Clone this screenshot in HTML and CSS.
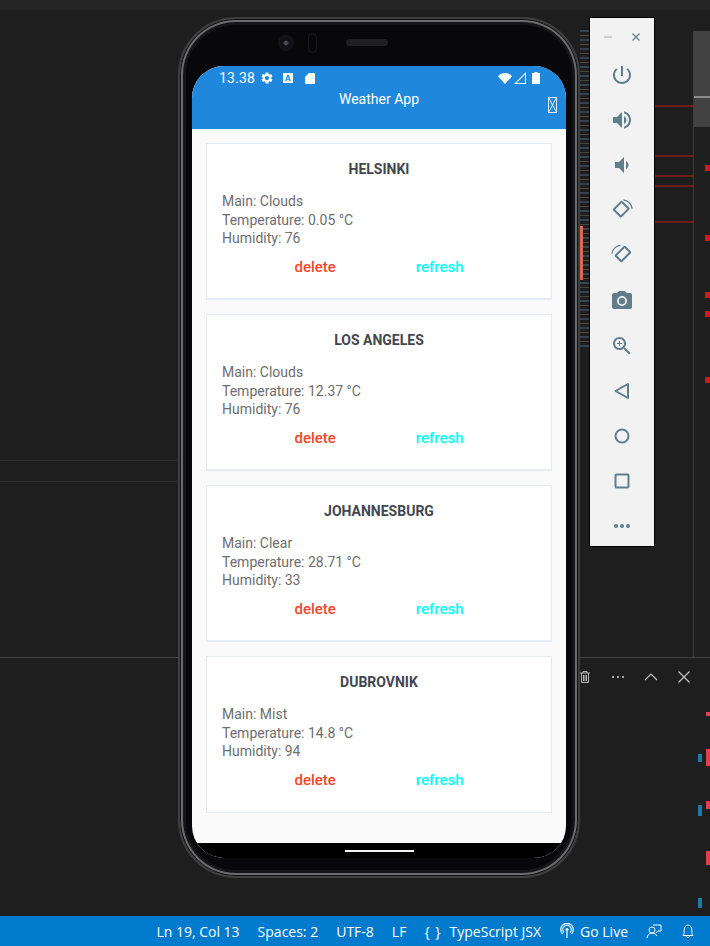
FILE: index.html
```html
<!DOCTYPE html>
<html lang="en">
<head>
    <meta charset="utf-8">
    <meta name="viewport" content="width=device-width, initial-scale=1.0">
    <title>Weather App</title>
    <link rel="stylesheet" href="styles.css">
</head>
<body>
    <div class="desktop">
        <!-- editor behind the emulator -->
        <div class="editor">
            <div class="titlestrip"></div>
            <div class="scroll-rule"></div>
            <div class="scroll-thumb"></div>
            <div class="scroll-thumb-line"></div>
            <div class="tab-line tab-line-a"></div>
            <div class="tab-line tab-line-b"></div>
            <div class="panel-line"></div>

            <div class="minimap"></div>
            <div class="minimap-accent"></div>

            <div class="err-line err-a"></div>
            <div class="err-line err-b"></div>
            <div class="err-line err-c"></div>
            <div class="err-line err-d"></div>
            <div class="err-line err-e"></div>

            <div class="mark mark-red m1"></div>
            <div class="mark mark-red m2"></div>
            <div class="mark mark-red m3"></div>
            <div class="mark mark-red m4"></div>
            <div class="mark mark-red m5"></div>
            <div class="mark mark-red m6"></div>
            <div class="mark mark-pink m7"></div>
            <div class="mark mark-pink m8"></div>
            <div class="mark mark-pink m9"></div>
            <div class="mark mark-pink m10"></div>
            <div class="mark mark-blue b1"></div>
            <div class="mark mark-blue b2"></div>
            <div class="mark mark-blue b3"></div>

            <div class="panel-actions">
                <svg class="panel-icon" viewBox="0 0 16 16"><path d="M3 4h10M6 4V2.5h4V4M4.5 4v9.5h7V4M6.5 6v6M8 6v6M9.5 6v6" fill="none" stroke="#b5b5b5" stroke-width="1"/></svg>
                <svg class="panel-icon" viewBox="0 0 16 16"><circle cx="3" cy="8" r="1.1" fill="#c5c5c5"/><circle cx="8" cy="8" r="1.1" fill="#c5c5c5"/><circle cx="13" cy="8" r="1.1" fill="#c5c5c5"/></svg>
                <svg class="panel-icon" viewBox="0 0 16 16"><path d="M2 11l6-6 6 6" fill="none" stroke="#c5c5c5" stroke-width="1.2"/></svg>
                <svg class="panel-icon" viewBox="0 0 16 16"><path d="M2.5 2.5l11 11M13.5 2.5l-11 11" fill="none" stroke="#c5c5c5" stroke-width="1.2"/></svg>
            </div>
        </div>

        <!-- phone -->
        <div class="phone">
            <div class="bezel-top">
                <span class="camera"></span>
                <span class="sensor"></span>
                <span class="speaker"></span>
            </div>
            <div class="screen">
                <header class="appbar">
                    <div class="statusbar">
                        <span class="clock">13.38</span>
                        <svg class="st-icon st-gear" viewBox="0 0 24 24"><path d="M19.14 12.94c.04-.3.06-.61.06-.94 0-.32-.02-.64-.07-.94l2.03-1.58c.18-.14.23-.41.12-.61l-1.92-3.32c-.12-.22-.37-.29-.59-.22l-2.39.96c-.5-.38-1.03-.7-1.62-.94l-.36-2.54c-.04-.24-.24-.41-.48-.41h-3.84c-.24 0-.43.17-.47.41l-.36 2.54c-.59.24-1.13.57-1.62.94l-2.39-.96c-.22-.08-.47 0-.59.22L2.74 8.87c-.12.21-.08.47.12.61l2.03 1.58c-.05.3-.09.63-.09.94s.02.64.07.94l-2.03 1.58c-.18.14-.23.41-.12.61l1.92 3.32c.12.22.37.29.59.22l2.39-.96c.5.38 1.03.7 1.62.94l.36 2.54c.05.24.24.41.48.41h3.84c.24 0 .44-.17.47-.41l.36-2.54c.59-.24 1.13-.56 1.62-.94l2.39.96c.22.08.47 0 .59-.22l1.92-3.32c.12-.22.07-.47-.12-.61l-2.01-1.58zM12 15.6c-1.98 0-3.6-1.62-3.6-3.6s1.62-3.6 3.6-3.6 3.6 1.62 3.6 3.6-1.62 3.6-3.6 3.6z" fill="#fff"/></svg>
                        <svg class="st-icon st-a" viewBox="0 0 10 10"><path fill-rule="evenodd" d="M0 0h10v10H0zM4.2 2L2.2 8h1.3l.4-1.3h2.2L6.5 8h1.3L5.8 2zM4.2 5.7L5 3.4l.7 2.3z" fill="#fff"/></svg>
                        <svg class="st-icon st-sd" viewBox="0 0 10 11"><path d="M4 0h5a1 1 0 0 1 1 1v9a1 1 0 0 1-1 1H1a1 1 0 0 1-1-1V4z" fill="#fff"/></svg>
                        <span class="st-spacer"></span>
                        <svg class="st-icon st-wifi" viewBox="0 0 14 11"><path d="M7 11L0 3.2C1.8 1.2 4.2 0 7 0s5.2 1.2 7 3.2z" fill="#fff"/></svg>
                        <svg class="st-icon st-signal" viewBox="0 0 12 12"><path fill-rule="evenodd" d="M12 0v12H0zM11 2.6L2.6 11H11z" fill="#fff"/></svg>
                        <svg class="st-icon st-batt" viewBox="0 0 8 12"><path d="M2.5 0h3v1H8v11H0V1h2.5z" fill="#fff"/></svg>
                    </div>
                    <div class="titlebar">
                        <h1 class="apptitle">Weather App</h1>
                        <svg class="tofu" viewBox="0 0 9 16"><path d="M.5.5h8v15h-8zM.5.5l8 15M8.5.5l-8 15" fill="none" stroke="#fff" stroke-width="1" opacity=".85"/></svg>
                    </div>
                </header>

                <main class="content">
                    <section class="card">
                        <h2 class="city">HELSINKI</h2>
                        <p class="info">Main: Clouds</p>
                        <p class="info">Temperature: 0.05 °C</p>
                        <p class="info">Humidity: 76</p>
                        <div class="actions"><button class="btn btn-delete">delete</button><button class="btn btn-refresh">refresh</button></div>
                    </section>
                    <section class="card">
                        <h2 class="city">LOS ANGELES</h2>
                        <p class="info">Main: Clouds</p>
                        <p class="info">Temperature: 12.37 °C</p>
                        <p class="info">Humidity: 76</p>
                        <div class="actions"><button class="btn btn-delete">delete</button><button class="btn btn-refresh">refresh</button></div>
                    </section>
                    <section class="card">
                        <h2 class="city">JOHANNESBURG</h2>
                        <p class="info">Main: Clear</p>
                        <p class="info">Temperature: 28.71 °C</p>
                        <p class="info">Humidity: 33</p>
                        <div class="actions"><button class="btn btn-delete">delete</button><button class="btn btn-refresh">refresh</button></div>
                    </section>
                    <section class="card card-last">
                        <h2 class="city">DUBROVNIK</h2>
                        <p class="info">Main: Mist</p>
                        <p class="info">Temperature: 14.8 °C</p>
                        <p class="info">Humidity: 94</p>
                        <div class="actions"><button class="btn btn-delete">delete</button><button class="btn btn-refresh">refresh</button></div>
                    </section>
                </main>

                <div class="navbar"><span class="home-pill"></span></div>
            </div>
        </div>

        <!-- emulator side toolbar -->
        <aside class="toolbar">
            <div class="win-controls">
                <svg class="win-icon" viewBox="0 0 8 8"><path d="M0 4h8" stroke="#a9b7be" stroke-width="1.2"/></svg>
                <svg class="win-icon" viewBox="0 0 8 8"><path d="M.5.5l7 7M7.5.5l-7 7" stroke="#607d8b" stroke-width="1.2"/></svg>
            </div>
            <svg class="tool" viewBox="0 0 24 24"><path d="M13 3h-2v10h2V3zm4.83 2.17l-1.42 1.42C17.99 7.86 19 9.81 19 12c0 3.87-3.13 7-7 7s-7-3.13-7-7c0-2.19 1.01-4.14 2.58-5.42L6.17 5.17C4.23 6.82 3 9.26 3 12c0 4.97 4.03 9 9 9s9-4.03 9-9c0-2.74-1.23-5.18-3.17-6.83z"/></svg>
            <svg class="tool" viewBox="0 0 24 24"><path d="M3 9v6h4l5 5V4L7 9H3zm13.5 3c0-1.77-1.02-3.29-2.5-4.03v8.05c1.48-.73 2.5-2.25 2.5-4.02zM14 3.23v2.06c2.89.86 5 3.54 5 6.71s-2.11 5.85-5 6.71v2.06c4.01-.91 7-4.49 7-8.77s-2.99-7.86-7-8.77z"/></svg>
            <svg class="tool" viewBox="0 0 24 24"><path d="M18.5 12c0-1.77-1.02-3.29-2.5-4.03v8.05c1.48-.73 2.5-2.25 2.5-4.02zM5 9v6h4l5 5V4L9 9H5z"/></svg>
            <svg class="tool" viewBox="0 0 24 24"><path fill-rule="evenodd" d="M10.5 3.2a1.6 1.6 0 0 1 2.2 0l6.4 6.4a1.6 1.6 0 0 1 0 2.2l-7.2 7.2a1.6 1.6 0 0 1-2.2 0L3.3 12.600a1.600 1.600 0 0 1 0-2.200zM11.600 5L5.100 11.500l5.700 5.700 6.500-6.500z"/><path d="M13.500 1.300a11 11 0 0 1 9.300 9.200l-1.300.2a9.700 9.700 0 0 0-8.200-8.100z"/></svg>
            <svg class="tool" viewBox="0 0 24 24"><path fill-rule="evenodd" d="M13.500 3.200a1.600 1.600 0 0 1 2.200 0l5 5a1.600 1.600 0 0 1 0 2.200l-8.300 8.300a1.600 1.600 0 0 1-2.200 0l-5-5a1.600 1.600 0 0 1 0-2.200zM14.600 5L7 12.600l4.300 4.300L18.900 9.300z"/><path d="M10.500 1.400a11 11 0 0 0-9.300 9.200l1.300.2a9.700 9.700 0 0 1 8.200-8.100z"/></svg>
            <svg class="tool" viewBox="0 0 24 24"><path fill-rule="evenodd" d="M9 2L7.170 4H4c-1.100 0-2 .9-2 2v12c0 1.100.9 2 2 2h16c1.100 0 2-.9 2-2V6c0-1.100-.9-2-2-2h-3.170L15 2H9zm3 15a5 5 0 1 1 0-10 5 5 0 0 1 0 10z"/><circle cx="12" cy="12" r="3.200"/></svg>
            <svg class="tool" viewBox="0 0 24 24"><path d="M15.500 14h-.79l-.28-.27C15.410 12.590 16 11.110 16 9.500 16 5.910 13.090 3 9.500 3S3 5.910 3 9.500 5.910 16 9.500 16c1.610 0 3.090-.59 4.230-1.570l.27.28v.79l5 4.990L20.490 19l-4.990-5zm-6 0C7.010 14 5 11.990 5 9.500S7.010 5 9.500 5 14 7.010 14 9.500 11.990 14 9.500 14z"/><path d="M12 10h-2v2H9v-2H7V9h2V7h1v2h2v1z"/></svg>
            <svg class="tool" viewBox="0 0 24 24"><path d="M18 5v14L5.500 12z" fill="none" stroke="#607d8b" stroke-width="2" stroke-linejoin="round"/></svg>
            <svg class="tool" viewBox="0 0 24 24"><circle cx="12" cy="12" r="6.500" fill="none" stroke="#607d8b" stroke-width="2"/></svg>
            <svg class="tool" viewBox="0 0 24 24"><rect x="5.500" y="5.500" width="13" height="13" rx="1" fill="none" stroke="#607d8b" stroke-width="2"/></svg>
            <svg class="tool" viewBox="0 0 24 24"><circle cx="6" cy="12" r="2"/><circle cx="12" cy="12" r="2"/><circle cx="18" cy="12" r="2"/></svg>
        </aside>

        <!-- vs code status bar -->
        <footer class="vs-status">
            <span>Ln 19, Col 13</span>
            <span>Spaces: 2</span>
            <span>UTF-8</span>
            <span>LF</span>
            <span class="vs-lang"><span class="braces">{ }</span>TypeScript JSX</span>
            <span class="vs-live">
                <svg class="vs-icon" viewBox="0 0 16 16"><circle cx="8" cy="6.500" r="1.500" fill="#fff"/><path d="M5 9.500a4.200 4.200 0 1 1 6 0M3.500 11a6.300 6.300 0 1 1 9 0M8 8v7" fill="none" stroke="#fff" stroke-width="1.200"/></svg>
                Go Live
            </span>
            <svg class="vs-icon vs-feedback" viewBox="0 0 16 16"><circle cx="6" cy="7" r="3" fill="none" stroke="#fff"/><path d="M1 15c.4-3 2.400-5 5-5s4.200 1.500 4.800 3M7 2h8v6h-3l-2 2" fill="none" stroke="#fff"/></svg>
            <svg class="vs-icon vs-bell" viewBox="0 0 16 16"><path d="M3 12.500c1-1 1.200-2.500 1.200-5C4.200 4 5.800 2 8 2s3.800 2 3.800 5.500c0 2.500.2 4 1.200 5zM6.500 13c0 1 .7 1.500 1.500 1.500s1.500-.5 1.500-1.500" fill="none" stroke="#fff"/></svg>
        </footer>
    </div>
</body>
</html>
```

FILE: styles.css
```css
* {
    box-sizing: border-box;
}

body {
    margin: 0;
    background-color: #1e1e1e;
    font-family: "Roboto", sans-serif;
}

.desktop {
    position: relative;
    width: 710px;
    height: 946px;
    overflow: hidden;
    display: flex;
    flex-direction: column;
    justify-content: flex-end;
}

/* Editor backdrop */
.editor {
    position: absolute;
    inset: 0 0 30px 0;
    background-color: #1e1e1e;
}

.titlestrip {
    height: 10px;
    background-color: #252526;
}

.scroll-rule {
    position: absolute;
    left: 693px;
    top: 31px;
    width: 1px;
    height: 626px;
    background-color: #3c3c3c;
}

.scroll-thumb {
    position: absolute;
    left: 694px;
    top: 31px;
    width: 16px;
    height: 96px;
    background-color: #424242;
}

.scroll-thumb-line {
    position: absolute;
    left: 694px;
    top: 96px;
    width: 16px;
    height: 2px;
    background-color: #8a8a8a;
}

.tab-line {
    position: absolute;
    left: 0;
    width: 177px;
    height: 1px;
    background-color: #2f2f2f;
}

.tab-line-a {
    top: 460px;
}

.tab-line-b {
    top: 481px;
}

.panel-line {
    position: absolute;
    left: 0;
    top: 657px;
    width: 710px;
    height: 1px;
    background-color: #444;
}

.minimap {
    position: absolute;
    left: 580px;
    top: 30px;
    width: 9px;
    height: 320px;
    background: repeating-linear-gradient(180deg, #3d5366 0 2px, #1e1e1e 2px 5px, #5c5a44 5px 6px, #1e1e1e 6px 9px);
    opacity: .7;
}

.minimap-accent {
    position: absolute;
    left: 580px;
    top: 226px;
    width: 3px;
    height: 54px;
    background-color: #d9694f;
}

.err-line {
    position: absolute;
    left: 655px;
    width: 38px;
    height: 2px;
    background-color: #6f1c1c;
}

.err-a { top: 105px; }
.err-b { top: 155px; }
.err-c { top: 175px; }
.err-d { top: 185px; }
.err-e { top: 221px; }

.mark {
    position: absolute;
}

.mark-red {
    left: 705px;
    width: 5px;
    height: 6px;
    background-color: #c51f1f;
}

.m1 { top: 165px; }
.m2 { top: 235px; }
.m3 { top: 292px; }
.m4 { top: 311px; }
.m5 { top: 377px; }
.m6 { top: 0; display: none; }

.mark-pink {
    left: 706px;
    width: 4px;
    background-color: #e2404a;
}

.m7 { top: 712px; height: 4px; }
.m8 { top: 749px; height: 17px; }
.m9 { top: 801px; height: 8px; }
.m10 { top: 851px; height: 14px; }

.mark-blue {
    left: 698px;
    width: 4px;
    background-color: #1b7aa8;
}

.b1 { top: 754px; height: 8px; }
.b2 { top: 805px; height: 11px; }
.b3 { top: 898px; height: 10px; }

.panel-actions {
    position: absolute;
    left: 577px;
    top: 669px;
    display: flex;
    gap: 17px;
}

.panel-icon {
    width: 16px;
    height: 16px;
}

/* Phone */
.phone {
    position: absolute;
    left: 178px;
    top: 17px;
    width: 402px;
    height: 861px;
    padding: 0 12px 0 12px;
    border: 2px solid #3f3f3f;
    border-radius: 58px;
    background-color: #08080a;
    box-shadow: inset 0 0 0 1px #101010, inset 0 0 0 3px #6c6c6f, inset 0 0 0 6px #151517;
}

.bezel-top {
    height: 47px;
    display: flex;
    align-items: center;
    padding-left: 86px;
}

.camera {
    width: 16px;
    height: 16px;
    border-radius: 50%;
    background: radial-gradient(circle, #4a4a50 0 1.500px, #101014 3px, #16161a 100%);
}

.sensor {
    width: 9px;
    height: 20px;
    margin-left: 14px;
    border-radius: 5px;
    border: 1px solid #18181b;
}

.speaker {
    width: 42px;
    height: 7px;
    margin-left: 29px;
    border-radius: 4px;
    background-color: #1f1f22;
}

.screen {
    height: 792px;
    border-radius: 32px;
    overflow: hidden;
    display: flex;
    flex-direction: column;
    background-color: #fafafa;
}

.appbar {
    height: 63px;
    background-color: #2088dc;
    color: #fff;
}

.statusbar {
    height: 24px;
    display: flex;
    align-items: center;
    padding: 0 26px 0 27px;
}

.clock {
    font-size: 14px;
    width: 41px;
    letter-spacing: .2px;
}

.st-icon {
    display: block;
    flex: none;
}

.st-gear {
    width: 14px;
    height: 14px;
    margin-left: 0;
}

.st-a {
    width: 10px;
    height: 10px;
    margin-left: 9px;
}

.st-sd {
    width: 10px;
    height: 11px;
    margin-left: 12px;
}

.st-spacer {
    flex: 1;
}

.st-wifi {
    width: 14px;
    height: 11px;
}

.st-signal {
    width: 12px;
    height: 12px;
    margin-left: 2px;
}

.st-batt {
    width: 8px;
    height: 12px;
    margin-left: 6px;
}

.titlebar {
    position: relative;
    text-align: center;
}

.apptitle {
    margin: 0;
    font-size: 14px;
    font-weight: 400;
    line-height: 18px;
}

.tofu {
    position: absolute;
    right: 9px;
    top: 7px;
    width: 9px;
    height: 16px;
}

.content {
    flex: 1;
    display: flex;
    flex-direction: column;
    gap: 14px;
    padding: 14px;
}

.card {
    height: 157px;
    padding: 15px 15px 0 15px;
    background-color: #fff;
    border: 1px solid #e6ebf2;
    border-bottom-width: 2px;
}

.card-last {
    border-bottom-width: 1px;
}

.city {
    margin: 0 0 13px 0;
    font-size: 14px;
    font-weight: 700;
    line-height: 20px;
    text-align: center;
    color: #43474d;
}

.info {
    margin: 0;
    font-size: 14px;
    line-height: 18.500px;
    color: #6e6e6e;
}

.actions {
    display: flex;
    justify-content: center;
    gap: 80px;
    margin-top: 9px;
}

.btn {
    padding: 0;
    border: none;
    background: none;
    font-family: "Roboto", sans-serif;
    font-size: 15px;
    font-weight: 500;
    line-height: 20px;
}

.btn-delete {
    color: #f4452c;
}

.btn-refresh {
    color: #00ffff;
}

.navbar {
    flex: none;
    height: 15px;
    background-color: #000;
    display: flex;
    justify-content: center;
    padding-top: 7px;
}

.home-pill {
    width: 69px;
    height: 2px;
    background-color: #f2f2f2;
}

/* Emulator toolbar */
.toolbar {
    position: absolute;
    left: 589px;
    top: 17px;
    width: 66px;
    height: 530px;
    padding-top: 11px;
    border: 1px solid #000;
    background-color: #f2f2f2;
    display: flex;
    flex-direction: column;
    align-items: center;
    gap: 21.100px;
}

.win-controls {
    width: 100%;
    display: flex;
    justify-content: space-between;
    padding: 0 14px;
    height: 16px;
    align-items: center;
    margin-bottom: -3px;
}

.win-icon {
    width: 8px;
    height: 8px;
}

.tool {
    flex: none;
    width: 24px;
    height: 24px;
    fill: #607d8b;
}

/* VS Code status bar */
.vs-status {
    position: relative;
    height: 30px;
    background-color: #007acc;
    color: #fff;
    font-family: "Open Sans", sans-serif;
    font-size: 14px;
    display: flex;
    align-items: center;
    justify-content: flex-end;
    gap: 18px;
    padding-right: 14px;
}

.vs-lang,
.vs-live {
    display: flex;
    align-items: center;
}

.braces {
    margin-right: 8px;
    letter-spacing: 1px;
}

.vs-icon {
    width: 16px;
    height: 16px;
    flex: none;
}

.vs-live .vs-icon {
    margin-right: 5px;
}
```
